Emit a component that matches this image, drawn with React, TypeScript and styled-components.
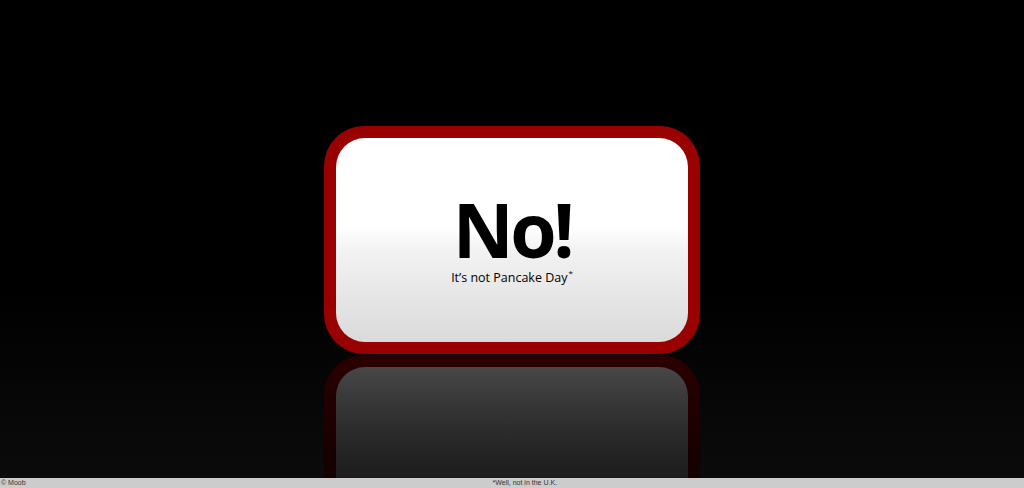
import styled, { createGlobalStyle } from 'styled-components';

const GlobalStyle = createGlobalStyle`
    html, body {
        margin: 0;
        height: 100%;
        background: #000;
    }
    #root {
        height: 100%;
    }
`;

const Page = styled.div`
    height: 100vh;
    display: flex;
    flex-direction: column;
`;
const Stage = styled.div`
    flex: 1;
    overflow: hidden;
    display: flex;
    flex-direction: column;
    align-items: center;
    padding-top: 126px;
    background: linear-gradient(to bottom, #000 0%, #000 60%, #0b0b0b 100%);
`;
const Card = styled.div`
    flex-shrink: 0;
    box-sizing: border-box;
    width: 376px;
    height: 228px;
    padding: 12px;
    border-radius: 40px;
    background: #990000;
`;
const Face = styled.div`
    box-sizing: border-box;
    height: 100%;
    padding-top: 54px;
    border-radius: 29px;
    text-align: center;
    background: linear-gradient(to bottom, #fff 0%, #fff 44%, #f3f3f3 54%, #dadada 100%);
    font-family: "Open Sans", "DejaVu Sans", sans-serif;
    color: #000;
`;
const Headline = styled.h1`
    margin: 0;
    font-size: 75px;
    line-height: 75px;
    font-weight: 700;
    letter-spacing: -3.5px;
`;
const Subline = styled.p`
    margin: 2px 0 0;
    font-size: 12.5px;
    line-height: 16px;
`;
const Mark = styled.sup`
    display: inline-block;
    margin-left: 1px;
    font-size: 8px;
    line-height: 8px;
    vertical-align: 6px;
`;
const Reflection = styled.div`
    flex-shrink: 0;
    box-sizing: border-box;
    width: 376px;
    height: 228px;
    margin-top: 1px;
    padding: 12px;
    border-radius: 40px;
    background: linear-gradient(to bottom, #2b0000 0%, #160000 50%, #100000 100%);
`;
const ReflectionFace = styled.div`
    height: 100%;
    border-radius: 29px;
    background: linear-gradient(to bottom, #474747 0%, #2c2c2c 30%, #1c1c1c 55%, #131313 100%);
`;
const Footer = styled.div`
    flex-shrink: 0;
    height: 10px;
    display: flex;
    align-items: center;
    background: #cccccc;
    font-family: "Liberation Sans", Arial, sans-serif;
    font-size: 7px;
    line-height: 10px;
    color: #333;
`;
const Credit = styled.span`
    padding-left: 1px;
`;
const Note = styled.span`
    flex: 1;
    text-align: center;
`;

export default function App() {
    return (
        <Page>
            <GlobalStyle />
            <Stage>
                <Card>
                    <Face>
                        <Headline>No!</Headline>
                        <Subline>It’s not Pancake Day<Mark>*</Mark></Subline>
                    </Face>
                </Card>
                <Reflection aria-hidden>
                    <ReflectionFace />
                </Reflection>
            </Stage>
            <Footer>
                <Credit>© Moob</Credit>
                <Note>*Well, not in the U.K.</Note>
            </Footer>
        </Page>
    );
}
